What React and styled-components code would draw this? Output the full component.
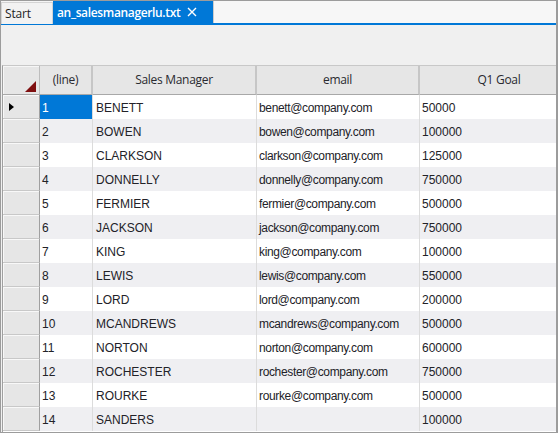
import React from "react";
import styled, { createGlobalStyle } from "styled-components";

const Global = createGlobalStyle`
  html, body { margin: 0; padding: 0; background: #ffffff; }
  * { box-sizing: border-box; }
`;

const Frame = styled.div`
  width: 558px;
  height: 433px;
  border: 1px solid #9c9c9c;
  border-right-width: 2px;
  background: #f0f0f0;
  overflow: hidden;
  display: flex;
  flex-direction: column;
`;

const TabStrip = styled.div`
  height: 22px;
  display: flex;
  background: #f5f5f5;
  border-bottom: 2px solid #0078d7;
  box-sizing: content-box;
  flex: none;
`;

const Tab = styled.div`
  height: 22px;
  display: flex;
  align-items: center;
  gap: 7px;
  padding: 0 ${(p) => (p.$active ? "6px 0 4px" : "3px")};
  width: ${(p) => p.$w}px;
  font-family: "Open Sans", "Noto Sans", sans-serif;
  font-size: 12px;
  font-weight: ${(p) => (p.$active ? 600 : 400)};
  letter-spacing: ${(p) => (p.$active ? "-0.35px" : "-0.2px")};
  color: ${(p) => (p.$active ? "#ffffff" : "#1e1e1e")};
  background: ${(p) => (p.$active ? "#0078d7" : "#f2f2f2")};
  border: ${(p) => (p.$active ? "none" : "1px solid #d4d4d4")};
  border-bottom: none;
  margin-top: ${(p) => (p.$active ? "0" : "1px")};
  white-space: nowrap;
`;

const Rest = styled.div`
  flex: 1;
  border-left: 1px solid #cccccc;
  background: #f7f7f7;
`;

const Toolbar = styled.div`
  height: 40px;
  flex: none;
  background: #f0f0f0;
`;

const Grid = styled.div`
  flex: 1;
  margin-left: 1px;
  border-left: 1px solid #a0a0a0;
  border-top: 1px solid #c8c8c8;
  display: grid;
  grid-template-columns: 37px 53px 164px 163px 160px;
  grid-auto-rows: 24px;
  grid-template-rows: 29px;
  align-content: start;
  font-family: "Liberation Sans", Arial, sans-serif;
  font-size: 12px;
  color: #222228;
  background: #ffffff;
  overflow: hidden;
`;

const Corner = styled.div`
  position: relative;
  background: #e6e6e6;
  border-right: 1px solid #bdbdbd;
  border-bottom: 1px solid #a8a8a8;
  box-shadow: inset 1px 1px 0 #f6f6f6;
`;

const Triangle = styled.div`
  position: absolute;
  right: 3px;
  bottom: 2px;
  width: 0;
  height: 0;
  border-left: 11px solid transparent;
  border-bottom: 11px solid #7f0f10;
`;

const HeadCell = styled.div`
  display: flex;
  align-items: center;
  justify-content: center;
  background: #e6e6e6;
  border-right: 2px solid #c6c6c6;
  border-bottom: 1px solid #a8a8a8;
  font-family: "Open Sans", "Noto Sans", sans-serif;
  font-size: 12px;
  letter-spacing: -0.3px;
  color: #2a2a30;
  padding-bottom: 1px;
`;

const RowHead = styled.div`
  display: flex;
  align-items: center;
  padding-left: 6px;
  background: #e6e6e6;
  border-right: 1px solid #a0a0a0;
  border-bottom: 1px solid #c8c8c8;
  box-shadow: inset 1px 1px 0 #f8f8f8;
`;

const Arrow = styled.div`
  width: 0;
  height: 0;
  border-top: 4px solid transparent;
  border-bottom: 4px solid transparent;
  border-left: 5px solid #000000;
`;

const Cell = styled.div`
  display: flex;
  align-items: center;
  padding-left: ${(p) => p.$pad ?? 2}px;
  padding-top: 1px;
  background: ${(p) => (p.$selected ? "#0078d7" : p.$alt ? "#efeff2" : "#ffffff")};
  color: ${(p) => (p.$selected ? "#ffffff" : "#222228")};
  border-right: 1px solid #dcdcdc;
  white-space: nowrap;
  overflow: hidden;
  letter-spacing: ${(p) => (p.$email ? "-0.35px" : "0")};
`;

const CloseIcon = () => (
  <svg width="10" height="10" viewBox="0 0 10 10" fill="none">
    <path d="M1 1L9 9M9 1L1 9" stroke="#ffffff" strokeWidth="1.4" />
  </svg>
);

const rows = [
  ["BENETT", "benett@company.com", "50000"],
  ["BOWEN", "bowen@company.com", "100000"],
  ["CLARKSON", "clarkson@company.com", "125000"],
  ["DONNELLY", "donnelly@company.com", "750000"],
  ["FERMIER", "fermier@company.com", "500000"],
  ["JACKSON", "jackson@company.com", "750000"],
  ["KING", "king@company.com", "100000"],
  ["LEWIS", "lewis@company.com", "550000"],
  ["LORD", "lord@company.com", "200000"],
  ["MCANDREWS", "mcandrews@company.com", "500000"],
  ["NORTON", "norton@company.com", "600000"],
  ["ROCHESTER", "rochester@company.com", "750000"],
  ["ROURKE", "rourke@company.com", "500000"],
  ["SANDERS", "", "100000"],
];

export default function App() {
  return (
    <>
      <Global />
      <Frame>
        <TabStrip>
          <Tab $w={52}>Start</Tab>
          <Tab $active $w={160}>
            an_salesmanagerlu.txt
            <CloseIcon />
          </Tab>
          <Rest />
        </TabStrip>
        <Toolbar />
        <Grid>
          <Corner>
            <Triangle />
          </Corner>
          <HeadCell>(line)</HeadCell>
          <HeadCell>Sales Manager</HeadCell>
          <HeadCell>email</HeadCell>
          <HeadCell>Q1 Goal</HeadCell>
          {rows.map(([name, email, goal], i) => {
            const alt = i % 2 === 1;
            return (
              <React.Fragment key={name}>
                <RowHead>{i === 0 && <Arrow />}</RowHead>
                <Cell $alt={alt} $selected={i === 0}>
                  {i + 1}
                </Cell>
                <Cell $alt={alt} $pad={3}>
                  {name}
                </Cell>
                <Cell $alt={alt} $email>
                  {email}
                </Cell>
                <Cell $alt={alt}>{goal}</Cell>
              </React.Fragment>
            );
          })}
        </Grid>
      </Frame>
    </>
  );
}
